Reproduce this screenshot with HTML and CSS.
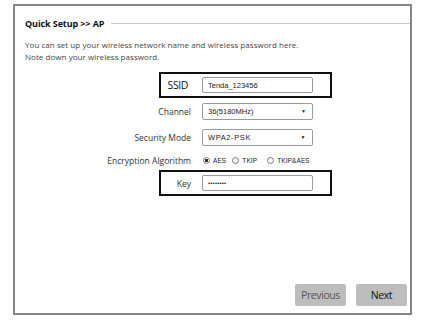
FILE: index.html
```html
<!DOCTYPE html>
<html lang="en">
<head>
    <meta charset="UTF-8">
    <meta name="viewport" content="width=device-width, initial-scale=1.0">
    <title>Quick Setup</title>
    <link rel="stylesheet" href="styles.css">
</head>
<body>
    <div class="frame">
        <div class="title-row">
            <h1>Quick Setup &gt;&gt; AP</h1>
            <span class="rule"></span>
        </div>

        <p class="intro">
            You can set up your wireless network name and wireless password here.<br>
            Note down your wireless password.
        </p>

        <div class="form">
            <div class="row boxed">
                <div class="label big">SSID</div>
                <div class="field">Tenda_123456</div>
            </div>
            <div class="row">
                <div class="label">Channel</div>
                <div class="field select">36(5180MHz)<span class="arrow">&#9660;</span></div>
            </div>
            <div class="row">
                <div class="label">Security Mode</div>
                <div class="field select spaced">WPA2-PSK<span class="arrow">&#9660;</span></div>
            </div>
            <div class="row short">
                <div class="label">Encryption Algorithm</div>
                <div class="radios">
                    <span class="radio checked"></span><span class="opt">AES</span>
                    <span class="radio"></span><span class="opt">TKIP</span>
                    <span class="radio wide"></span><span class="opt">TKIP&amp;AES</span>
                </div>
            </div>
            <div class="row boxed">
                <div class="label">Key</div>
                <div class="field"><span class="dots">••••••••</span></div>
            </div>
        </div>

        <div class="actions">
            <button class="btn btn-disabled">Previous</button>
            <button class="btn">Next</button>
        </div>
    </div>
</body>
</html>
```

FILE: styles.css
```css
body {
    margin: 0;
    padding: 4px 0 0 13px;
    font-family: "Open Sans", "Noto Sans", sans-serif;
    color: #333;
    background: #fff;
}
.frame {
    box-sizing: border-box;
    width: 399px;
    height: 311px;
    border: 2px solid #858585;
    display: flex;
    flex-direction: column;
    padding: 11px 0 0 10px;
}
.title-row {
    display: flex;
    align-items: center;
    height: 12px;
}
h1 {
    margin: 0;
    font-size: 9px;
    font-weight: bold;
    letter-spacing: -0.1px;
    color: #111;
    white-space: nowrap;
}
.rule {
    flex: 1;
    height: 1px;
    background: #c8c8c8;
    margin-left: 7px;
}
.intro {
    margin: 10px 0 0 0;
    font-size: 8px;
    line-height: 12px;
    color: #444;
    letter-spacing: 0.05px;
}
.form {
    margin: 9px 0 0 134px;
}
.row {
    box-sizing: border-box;
    width: 173px;
    height: 26px;
    border: 2px solid transparent;
    display: flex;
    align-items: center;
    padding-right: 17px;
}
.row.boxed {
    border-color: #111;
}
.row.short {
    height: 20px;
}
.label {
    flex: 1;
    min-width: 0;
    display: flex;
    justify-content: flex-end;
    white-space: nowrap;
    margin-right: 11px;
    font-size: 8.5px;
    color: #333;
}
.label.big {
    font-size: 10.5px;
    letter-spacing: -0.4px;
    color: #111;
    margin-right: 14px;
}
.field {
    box-sizing: border-box;
    width: 111px;
    height: 17px;
    border: 1px solid #9a9a9a;
    border-radius: 2px;
    display: flex;
    align-items: center;
    padding: 0 6px 0 5px;
    font-family: "Liberation Sans", Arial, sans-serif;
    font-size: 7.5px;
    color: #222;
}
.boxed .field {
    height: 16px;
}
.select {
    justify-content: space-between;
}
.spaced {
    letter-spacing: 0.6px;
}
.arrow {
    font-size: 5px;
    color: #222;
}
.dots {
    font-size: 6px;
    letter-spacing: 0.2px;
}
.radios {
    width: 111px;
    flex-shrink: 0;
    display: flex;
    align-items: center;
    font-family: "Liberation Sans", Arial, sans-serif;
    font-size: 6.5px;
    color: #222;
    white-space: nowrap;
}
.radio {
    flex-shrink: 0;
    box-sizing: border-box;
    width: 7px;
    height: 7px;
    border: 1px solid #777;
    border-radius: 50%;
    margin: 0 3px 0 6px;
}
.radio:first-child {
    margin-left: 1px;
}
.radio.wide {
    margin-left: 10px;
}
.radio.checked {
    background: radial-gradient(circle, #333 40%, #fff 55%);
}
.opt {
    flex-shrink: 0;
    letter-spacing: 0.1px;
}
.actions {
    margin-top: auto;
    display: flex;
    justify-content: flex-end;
    gap: 10px;
    padding: 0 3px 7px 0;
}
.btn {
    width: 51px;
    height: 22px;
    border: none;
    border-radius: 2px;
    background: #bdbdbd;
    font-family: "Open Sans", "Noto Sans", sans-serif;
    font-size: 10.5px;
    letter-spacing: -0.4px;
    color: #111;
    padding: 0;
}
.btn-disabled {
    color: #555;
}
```
